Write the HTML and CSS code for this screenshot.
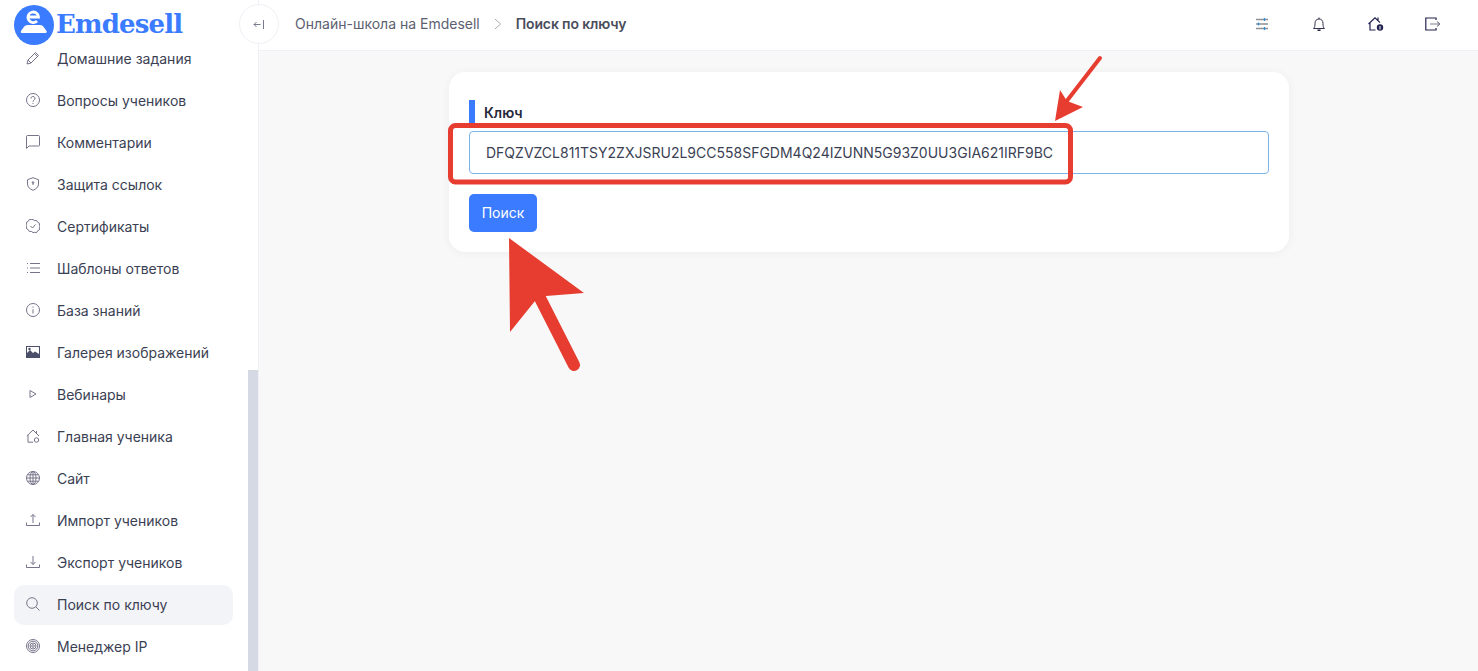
FILE: index.html
```html
<!DOCTYPE html>
<html lang="ru">
<head>
<meta charset="utf-8">
<title>Поиск по ключу</title>
<link rel="stylesheet" href="styles.css">
</head>
<body>
<div class="app">
  <aside class="sidebar">
    <div class="brand">
      <svg class="brand-logo" viewBox="0 0 40 40"><circle cx="20" cy="20" r="20" fill="#3a7bff"/><path d="M13.500 20h13q2.500 0 3.500 2.500l2.600 3.500q.6 2-1.600 2H8.500q-2.200 0-1.600-2l2.600-3.500q1-2.500 4-2.500z" fill="#fff"/><path d="M14.500 12H24.500A5.300 5.300 0 1 0 23 16" fill="none" stroke="#fff" stroke-width="2.800"/></svg>
      <span class="brand-name">Emdesell</span>
    </div>
    <nav class="menu">
      <a class="menu-item"><svg class="mi" viewBox="0 0 14 14"><path d="M1 13l1-4 7.500-7.500 3 3L5 12zM8.500 2.500l3 3M2 9l3 3"/></svg>Домашние задания</a>
      <a class="menu-item"><svg class="mi" viewBox="0 0 14 14"><circle cx="7" cy="7" r="6.500"/><path d="M5 5.500a2 2 0 1 1 3 1.700c-.7.4-1 .8-1 1.600M7 10v1"/></svg>Вопросы учеников</a>
      <a class="menu-item"><svg class="mi" viewBox="0 0 14 14"><path d="M.5 13.500v-12q0-1 1-1h11q1 0 1 1v8.500q0 1-1 1H3z"/></svg>Комментарии</a>
      <a class="menu-item"><svg class="mi" viewBox="0 0 14 14"><path d="M7 .7l5.500 2v4.300c0 3-2.500 5.200-5.500 6.300C4 12.200 1.500 10 1.500 7V2.700zM7 5v3" /><circle cx="7" cy="5.500" r=".8"/></svg>Защита ссылок</a>
      <a class="menu-item"><svg class="mi" viewBox="0 0 14 14"><path d="M7 .5l1.700 1.100 2-.1 1 1.800 1.800 1-.1 2L14 7l-.6 1.700.1 2-1.800 1-1 1.800-2-.1L7 13.500l-1.700-1.100-2 .1-1-1.800-1.800-1 .1-2L0 7l.6-1.700-.1-2 1.800-1 1-1.800 2 .1zM4.500 7l2 2 3-3.500"/></svg>Сертификаты</a>
      <a class="menu-item"><svg class="mi" viewBox="0 0 14 14"><path d="M4 2.500h10M4 7h10M4 11.500h10M1 2.500h1M1 7h1M1 11.500h1"/></svg>Шаблоны ответов</a>
      <a class="menu-item"><svg class="mi" viewBox="0 0 14 14"><circle cx="7" cy="7" r="6.500"/><path d="M7 6.200V10.500M7 3.500v1.200"/></svg>База знаний</a>
      <a class="menu-item"><svg class="mi mi-solid" viewBox="0 0 14 14"><path d="M0 1h14v12H0zM1 2v6l3-3 3 3 2-1.500L13 9V2z"/><circle cx="3.500" cy="4" r="1.200"/></svg>Галерея изображений</a>
      <a class="menu-item"><svg class="mi" viewBox="0 0 14 14"><path d="M4 3.500l6 3.500-6 3.500z"/></svg>Вебинары</a>
      <a class="menu-item"><svg class="mi" viewBox="0 0 14 14"><path d="M.8 7L7 1l6 6M2 6v7.200h5M10.500 2v2"/><circle cx="10.500" cy="11" r="2.200"/></svg>Главная ученика</a>
      <a class="menu-item"><svg class="mi" viewBox="0 0 14 14"><circle cx="7" cy="7" r="6.500"/><ellipse cx="7" cy="7" rx="3" ry="6.500"/><path d="M7 .5v13M.5 7h13M1.500 3.800h11M1.500 10.200h11"/></svg>Сайт</a>
      <a class="menu-item"><svg class="mi" viewBox="0 0 14 14"><path d="M.5 9.500v3h13v-3M7 10V1.500M4.500 4L7 1.500 9.500 4"/></svg>Импорт учеников</a>
      <a class="menu-item"><svg class="mi" viewBox="0 0 14 14"><path d="M.5 9.500v3h13v-3M7 1v8.500M4.500 7L7 9.500 9.500 7"/></svg>Экспорт учеников</a>
      <a class="menu-item is-active"><svg class="mi" viewBox="0 0 14 14"><circle cx="6" cy="6" r="5.300"/><path d="M10 10l3.500 3.500"/></svg>Поиск по ключу</a>
      <a class="menu-item"><svg class="mi" viewBox="0 0 14 14"><circle cx="7" cy="7" r="6.500"/><circle cx="7" cy="7" r="4.800"/><circle cx="7" cy="7" r="3"/><circle cx="7" cy="7" r="1.300"/></svg>Менеджер IP</a>
    </nav>
    <div class="scroll-thumb"></div>
  </aside>

  <div class="content">
    <header class="topbar">
      <button class="collapse" type="button" aria-label="Свернуть">
        <svg viewBox="0 0 12 12" width="12" height="12"><path d="M7.500 6.500H1M3.500 4L1 6.500 3.500 9M10.500 2v9" fill="none" stroke="#777a8a" stroke-width="1"/></svg>
      </button>
      <div class="crumbs">
        <span class="crumb">Онлайн-школа на Emdesell</span>
        <svg class="crumb-sep" viewBox="0 0 8 12" width="8" height="12"><path d="M1 1l5.500 5L1 11" fill="none" stroke="#a9abb5" stroke-width="1"/></svg>
        <span class="crumb-current">Поиск по ключу</span>
      </div>
      <div class="tools">
        <svg class="tool" viewBox="0 0 16 14"><path d="M2 2.500h12M2 7h12M2 11.500h12" stroke="#8f8f96" stroke-width="1.300"/><path d="M10.500 1v3M4.500 5.500v3M10.500 10v3" stroke="#2d8fd8" stroke-width="1.300"/></svg>
        <svg class="tool" viewBox="0 0 16 14"><path d="M2.500 11.500h11c-1.200-1-1.500-2.500-1.500-5 0-2.800-1.500-4.500-4-4.500S4 3.700 4 6.500c0 2.500-.3 4-1.500 5zM8 .5V2" stroke="#33334f"/><path d="M6.500 13.200h3" stroke="#1f1f3f" stroke-width="1.500"/></svg>
        <svg class="tool" viewBox="0 0 16 14"><path d="M.5 7L7 .8l5 4.800M2 5.800V13H7.500M10 .5v3" stroke="#23234f" stroke-width="1.200"/><circle cx="12" cy="10.500" r="3.200" fill="#23234f" stroke="none"/><path d="M12 9v3.500" stroke="#fff"/></svg>
        <svg class="tool" viewBox="0 0 16 14"><path d="M11 3V1H.8v12H11v-2" stroke="#23234f" stroke-width="1.200"/><path d="M5 7h9.500" stroke="#a8a8b0" stroke-width="1.500"/><path d="M12 4.500L14.800 7 12 9.500" stroke="#55566e"/></svg>
      </div>
    </header>

    <main class="main">
      <form class="card">
        <div class="field-label"><span class="field-title">Ключ</span></div>
        <input class="field-input" type="text" value="DFQZVZCL811TSY2ZXJSRU2L9CC558SFGDM4Q24IZUNN5G93Z0UU3GIA621IRF9BC">
        <button class="submit" type="button">Поиск</button>
      </form>
    </main>
  </div>

  <svg class="annotations" viewBox="0 0 1478 671" width="1478" height="671">
    <rect x="450.500" y="125.500" width="620" height="56.500" rx="5" fill="none" stroke="#e63d30" stroke-width="5"/>
    <path d="M1100 58L1066 102" stroke="#e63d30" stroke-width="4" stroke-linecap="round"/>
    <path d="M1055 121L1060 90 1067 101 1083 107z" fill="#e63d30"/>
    <path d="M540 298L574 365" stroke="#e63d30" stroke-width="12" stroke-linecap="round"/>
    <path d="M509 238L584 293 546 296 535 301 510 332z" fill="#e63d30"/>
  </svg>
</div>
</body>
</html>
```
FILE: styles.css
```css
* { box-sizing: border-box; }
html, body { margin: 0; height: 100%; overflow: hidden; }
body { font-family: Inter, "Liberation Sans", sans-serif; font-size: 14px; color: #2f3349; background: #f8f8f9; }

.app { position: relative; display: flex; width: 1478px; height: 671px; overflow: hidden; }

.sidebar { position: relative; flex: 0 0 259px; height: 671px; background: #fff; border-right: 1px solid #eff0f6; overflow: hidden; }
.brand { display: flex; align-items: flex-start; gap: 2px; height: 39px; padding: 4px 0 0 14px; }
.brand-logo { flex: none; width: 40px; height: 40px; margin-top: 1px; position: relative; z-index: 1; }
.brand-name { font-family: "DejaVu Serif", serif; font-weight: 700; font-size: 26px; line-height: 40px; color: #3a7bff; letter-spacing: -.85px; }

.menu { display: flex; flex-direction: column; gap: 2px; width: 219px; margin-left: 14px; }
.menu-item { display: flex; align-items: center; gap: 17px; height: 40px; padding: 0 0 2px 12px; border-radius: 10px; color: #3b3f54; white-space: nowrap; }
.menu-item.is-active { background: #f3f4f7; }
.mi { flex: none; width: 14px; height: 14px; fill: none; stroke: #77748a; stroke-width: 1; }
.mi-solid { fill: #4c4f69; fill-rule: evenodd; stroke: none; }

.scroll-thumb { position: absolute; left: 248px; top: 370px; width: 10px; height: 301px; background: #d5d9e3; }

.content { flex: 1; display: flex; flex-direction: column; min-width: 0; }

.topbar { position: relative; flex: 0 0 51px; display: flex; align-items: center; padding: 0 37px 3px 36px; background: #fff; border-bottom: 1px solid #eff0f6; }
.collapse { position: absolute; left: -20px; top: 4px; width: 40px; height: 40px; display: flex; align-items: center; justify-content: center; padding: 0; background: #fff; border: 1px solid #eff0f6; border-radius: 50%; z-index: 2; }
.crumbs { display: flex; align-items: center; gap: 14px; }
.crumb { color: #5c6070; }
.crumb-sep { flex: none; }
.crumb-current { font-weight: 600; color: #4a4d5c; letter-spacing: -.14px; }
.tools { display: flex; align-items: center; gap: 41px; margin-left: auto; }
.tool { flex: none; width: 16px; height: 14px; fill: none; stroke-width: 1; }

.main { flex: 1; display: flex; justify-content: flex-start; align-items: flex-start; padding: 21px 0 0 190px; background: #f8f8f9; }
.card { display: flex; flex-direction: column; align-items: flex-start; width: 840px; height: 180px; padding: 28px 20px 0; background: #fff; border-radius: 16px; box-shadow: 0 1px 8px rgba(60, 66, 90, .06); }
.field-label { display: flex; align-items: center; height: 23px; padding-left: 9px; border-left: 6px solid #3a7bff; margin-bottom: 8px; }
.field-title { font-weight: 600; color: #25283a; position: relative; top: 1px; }
.field-input { display: block; width: 800px; height: 43px; padding: 0 16px; border: 1px solid #7ab4ea; border-radius: 4px; background: #fff; font: 400 14px Inter, "Liberation Sans", sans-serif; color: #3b3f54; outline: none; }
.submit { margin-top: 20px; width: 68px; height: 38px; padding: 0 0 2px; border: 0; border-radius: 5px; background: #3a7bff; color: #fff; font: 400 14px Inter, "Liberation Sans", sans-serif; }

.annotations { position: absolute; left: 0; top: 0; pointer-events: none; z-index: 5; }
```
